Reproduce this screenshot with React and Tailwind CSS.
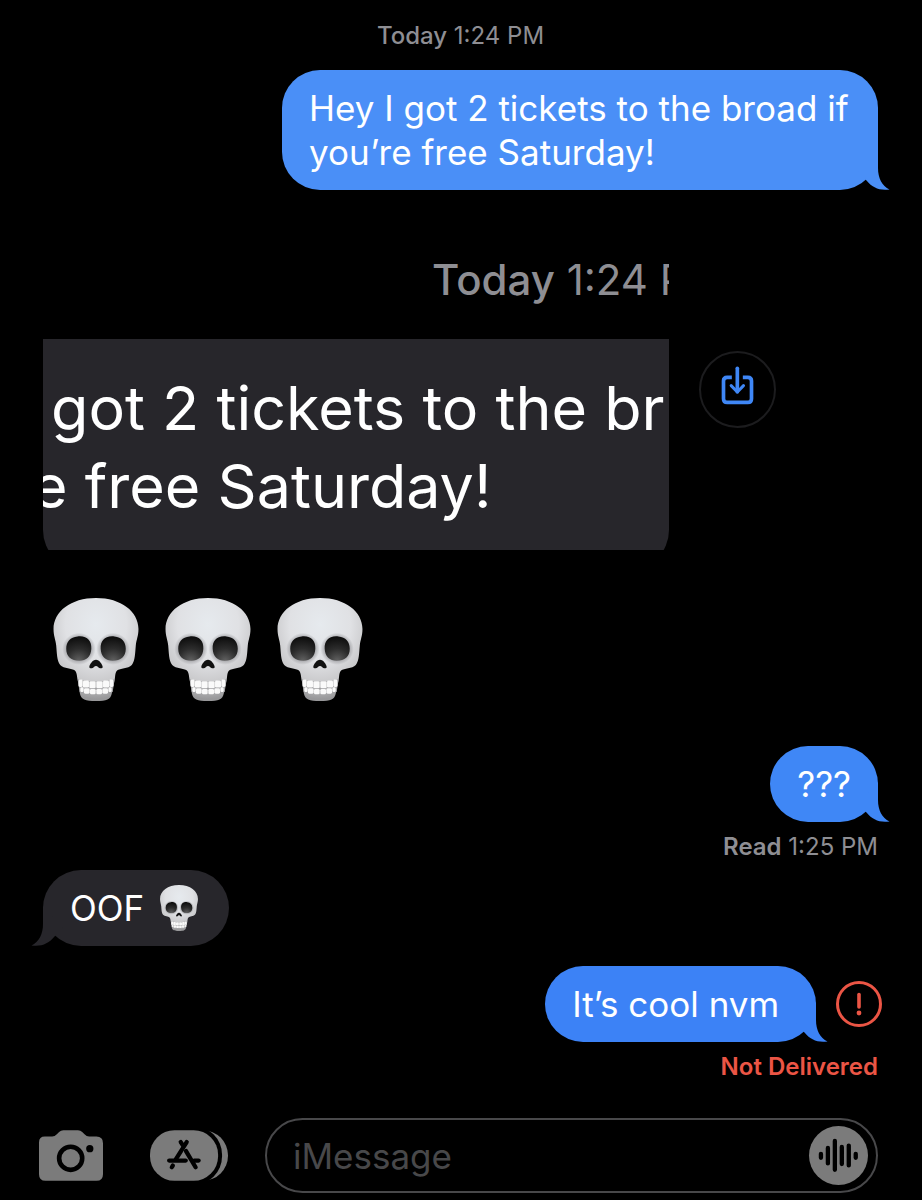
import React, { useId, useState } from "react";

const Tail = ({ side, className }) => (
  <svg
    viewBox="0 0 36 40"
    aria-hidden="true"
    className={`absolute bottom-0 h-10 w-9 ${
      side === "right" ? "-right-3" : "-left-3 -scale-x-100"
    } ${className}`}
  >
    <path
      d="M24 0V18C24 28 28 36 35.5 39.4C26 41 18 37.500 12.500 30.500L4 22Z"
      fill="currentColor"
    />
  </svg>
);

const Bubble = ({ side = "right", color, tail, children }) => (
  <div
    className={`relative w-fit max-w-[596px] rounded-[38px] px-[27px] py-4 text-[35px] leading-[44px] text-white ${color}`}
  >
    <Tail side={side} className={tail} />
    <p className="relative flex items-center gap-4">{children}</p>
  </div>
);

const Skull = ({ className }) => {
  const id = useId();
  return (
    <svg viewBox="0 0 254 308" role="img" aria-label="skull" className={className}>
      <defs>
        <radialGradient id={`${id}bone`} cx="0.5" cy="0.26" r="0.72">
          <stop offset="0" stopColor="#e6eaee" />
          <stop offset="0.5" stopColor="#e0e1e4" />
          <stop offset="0.8" stopColor="#c8c8ca" />
          <stop offset="1" stopColor="#98989a" />
        </radialGradient>
        <radialGradient id={`${id}shade`}>
          <stop offset="0.7" stopColor="#8c8c90" stopOpacity="0.7" />
          <stop offset="1" stopColor="#8c8c90" stopOpacity="0" />
        </radialGradient>
        <radialGradient id={`${id}eye`} cx="0.5" cy="1" r="1">
          <stop offset="0" stopColor="#626262" />
          <stop offset="0.5" stopColor="#2c2c2c" />
          <stop offset="1" stopColor="#0b0b0b" />
        </radialGradient>
      </defs>
      <path
        d="M127 0C52 0 0 40 0 93C0 114 6 124 8 142C10 164 10 188 20 200C31 212 55 209 64 217C71 224 70 238 73 250L79 286C82 302 95 308 127 308C159 308 171 302 174 286L182 250C185 238 183 224 190 217C199 209 223 212 234 200C244 188 244 164 246 142C248 124 254 114 254 93C254 40 202 0 127 0Z"
        fill={`url(#${id}bone)`}
      />
      <ellipse cx="76" cy="152" rx="50" ry="48" fill={`url(#${id}shade)`} />
      <ellipse cx="178" cy="152" rx="50" ry="48" fill={`url(#${id}shade)`} />
      <path d="M72 115C100 112 114 127 113 152C112 176 98 188 77 188C53 188 38 175 38 152C38 130 50 117 72 115Z" fill={`url(#${id}eye)`} />
      <path d="M182 115C204 117 216 130 216 152C216 175 201 188 177 188C156 188 142 176 141 152C140 127 154 112 182 115Z" fill={`url(#${id}eye)`} />
      <path d="M127 185C117 185 108 199 107 206C108 213 118 210 121 206C124 202 130 202 133 206C136 210 146 213 147 206C146 199 137 185 127 185Z" fill="#111" />
      <path d="M73 243Q127 257 182 243L177 281Q127 294 78 281Z" fill="#a2a2a4" />
      <g fill="#fafafa">
        <rect x="75" y="244" width="12" height="22" rx="4" />
        <rect x="88" y="247" width="18" height="21" rx="4" />
        <rect x="107" y="249" width="19" height="21" rx="4" />
        <rect x="128" y="249" width="19" height="21" rx="4" />
        <rect x="148" y="247" width="18" height="21" rx="4" />
        <rect x="167" y="244" width="12" height="22" rx="4" />
        <rect x="80" y="267" width="10" height="14" rx="4" />
        <rect x="91" y="270" width="17" height="16" rx="4" />
        <rect x="109" y="272" width="17" height="16" rx="4" />
        <rect x="128" y="272" width="17" height="16" rx="4" />
        <rect x="146" y="270" width="17" height="16" rx="4" />
        <rect x="164" y="267" width="10" height="14" rx="4" />
      </g>
    </svg>
  );
};

const DownloadIcon = () => (
  <svg
    viewBox="0 0 104 120"
    aria-hidden="true"
    className="mb-2 h-10 w-[35px]"
    fill="none"
    stroke="currentColor"
    strokeWidth="11"
    strokeLinecap="round"
    strokeLinejoin="round"
  >
    <path d="M35 37H21Q10 37 10 48V101Q10 112 21 112H83Q94 112 94 101V48Q94 37 83 37H68" strokeLinecap="butt" />
    <path d="M51.500 10V80" />
    <path d="M33 62L51.500 81L70 62" strokeWidth="9" />
  </svg>
);

const CameraIcon = () => (
  <svg viewBox="0 0 194 153" aria-hidden="true" className="h-[51px] w-16">
    <path
      d="M18 19H40Q48 19 54 12L61 5Q66 0 74 0H118Q126 0 131 5L138 12Q144 19 152 19H174Q194 19 194 39V133Q194 153 174 153H20Q0 153 0 133V37Q0 19 18 19Z"
      fill="currentColor"
    />
    <circle cx="96" cy="85" r="35" fill="none" stroke="#000" strokeWidth="14" />
    <circle cx="154" cy="56" r="11" fill="#000" />
  </svg>
);

const AppsIcon = () => (
  <svg viewBox="0 0 236 153" aria-hidden="true" className="h-[51px] w-[78px]">
    <rect x="60" y="0" width="176" height="153" rx="76" fill="currentColor" />
    <rect x="-12" y="-12" width="230" height="177" rx="86" fill="#000" />
    <rect width="206" height="153" rx="74" fill="currentColor" />
    <g stroke="#000" strokeWidth="13" strokeLinecap="round">
      <path d="M111 36L78 88" />
      <path d="M93 36L99 45" />
      <path d="M109 63L138 112" />
      <path d="M58 92H108" />
      <path d="M134 92H147" />
      <path d="M69 107L66 112" />
    </g>
  </svg>
);

const AudioIcon = () => (
  <svg
    viewBox="0 0 178 178"
    aria-hidden="true"
    className="h-full w-full"
    stroke="#000"
    strokeWidth="13"
    strokeLinecap="round"
  >
    <path d="M36 84V96M57 66V113M78 45V132M99 63V115M120 59V119M141 84V96" />
  </svg>
);

const App = () => {
  const [message, setMessage] = useState("");

  return (
    <main className="flex min-h-screen flex-col bg-black pt-[22px] pb-[7px] font-['Inter',sans-serif] text-[24px] leading-7 text-[#8e8e93]">
      <section className="flex flex-col pr-11 pl-[43px]">
        <p className="text-center">
          <span className="font-medium">Today</span> 1:24 PM
        </p>

        <div className="mt-5 self-end">
          <Bubble color="bg-[#4a8ff7]" tail="text-[#4a8ff7]">
            Hey I got 2 tickets to the broad if you’re free Saturday!
          </Bubble>
        </div>

        {/* Cropped picture attachment */}
        <div className="mt-[38px] flex items-center gap-[30px]">
          <figure className="w-3/4 overflow-hidden pt-7 whitespace-nowrap">
            <p className="pl-[389px] text-[42px] leading-[48px]">
              <span className="font-medium">Today</span> 1:24 PM
            </p>
            <div className="mt-[35px] h-[211px] overflow-hidden">
              <div className="h-[231px] rounded-b-[40px] bg-[#27262b] pt-[30px] text-[61px] leading-[78px] text-white">
                <p className="pl-2">got 2 tickets to the br</p>
                <p className="-ml-[11px]">e free Saturday!</p>
              </div>
            </div>
          </figure>
          <button
            type="button"
            aria-label="Save image"
            className="flex size-[77px] shrink-0 items-center justify-center rounded-full border-2 border-[#1c1c1e] text-[#3f87f6]"
          >
            <DownloadIcon />
          </button>
        </div>

        <div className="mt-12 flex gap-[26px] pl-[10px]">
          <Skull className="h-[103px] w-[86px]" />
          <Skull className="h-[103px] w-[86px]" />
          <Skull className="h-[103px] w-[86px]" />
        </div>

        <div className="mt-[45px] self-end">
          <Bubble color="bg-[#3f87f6]" tail="text-[#3f87f6]">
            ???
          </Bubble>
        </div>
        <p className="mt-[11px] text-right">
          <span className="font-semibold">Read</span> 1:25 PM
        </p>

        <div className="mt-[9px]">
          <Bubble side="left" color="bg-[#27262b]" tail="text-[#27262b]">
            OOF <Skull className="-my-1 mr-1 h-[46px] w-[38px]" />
          </Bubble>
        </div>

        <div className="-mr-1 mt-5 flex items-center gap-5 self-end">
          <Bubble color="bg-[#3c82f6]" tail="text-[#3c82f6]">
            It’s cool nvm&nbsp;
          </Bubble>
          <button type="button" aria-label="Message not delivered" className="text-[#eb5545]">
            <svg viewBox="0 0 46 46" aria-hidden="true" className="size-[46px]" fill="none" stroke="currentColor">
              <circle cx="23" cy="23" r="21.500" strokeWidth="3" />
              <path d="M23 13.500V26" strokeWidth="3.600" strokeLinecap="round" />
              <circle cx="23" cy="32" r="2.400" fill="currentColor" stroke="none" />
            </svg>
          </button>
        </div>
        <p className="mt-[11px] text-right font-semibold text-[#eb5545]">Not Delivered</p>
      </section>

      {/* Compose bar */}
      <form
        onSubmit={(e) => e.preventDefault()}
        className="mt-[37px] flex items-center pr-11 pl-[39px] text-[#7b7b7b]"
      >
        <button type="button" aria-label="Camera">
          <CameraIcon />
        </button>
        <button type="button" aria-label="Apps" className="ml-[47px]">
          <AppsIcon />
        </button>
        <div className="ml-[37px] flex h-[75px] min-w-0 flex-1 items-center rounded-full border-2 border-[#48484a] pr-2 pl-[26px]">
          <input
            type="text"
            aria-label="iMessage"
            placeholder="iMessage"
            value={message}
            onChange={(e) => setMessage(e.target.value)}
            className="min-w-0 flex-1 bg-transparent text-[35px] leading-[44px] text-white outline-none placeholder:text-[#48484a]"
          />
          <button
            type="button"
            aria-label="Record audio"
            className="size-[59px] shrink-0 rounded-full bg-[#7b7b7b]"
          >
            <AudioIcon />
          </button>
        </div>
      </form>
    </main>
  );
};

export default App;
